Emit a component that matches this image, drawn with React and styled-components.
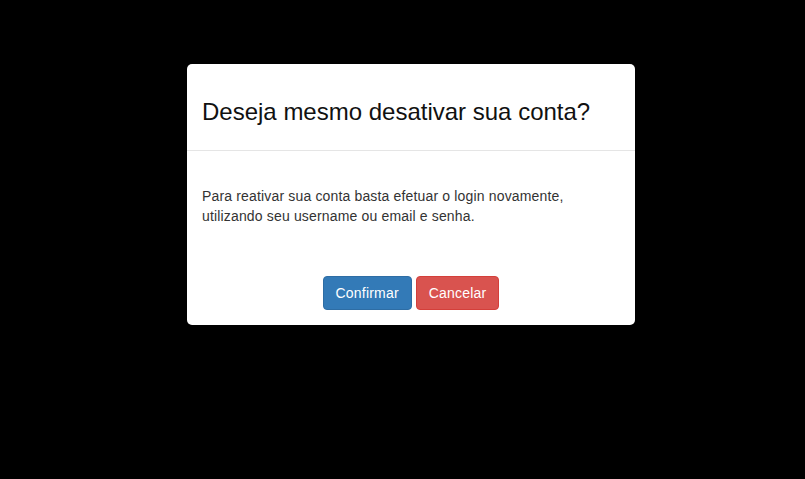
import React from "react";
import styled, { createGlobalStyle } from "styled-components";

const Global = createGlobalStyle`
  html, body { margin: 0; padding: 0; background: #000; }
  body { font-family: "Liberation Sans", Arial, sans-serif; font-size: 14px; line-height: 20px; color: #333; }
  * { box-sizing: border-box; }
`;

const Backdrop = styled.div`
  min-height: 479px;
  background: #000;
  display: flex;
  justify-content: center;
  align-items: flex-start;
  padding: 64px 0 0 17px;
`;

const Dialog = styled.div`
  width: 448px;
  background: #fff;
  border-radius: 5px;
  overflow: hidden;
`;

const Header = styled.div`
  padding: 15px;
  border-bottom: 1px solid #e5e5e5;
`;

const Title = styled.h3`
  margin: 20px 0 10px;
  font-size: 24px;
  line-height: 26.4px;
  font-weight: 400;
  color: #111;
`;

const Body = styled.div`
  padding: 35px 15px;
`;

const Text = styled.p`
  margin: 0;
  color: #333;
  letter-spacing: 0.16px;
`;

const Footer = styled.div`
  padding: 15px;
  display: flex;
  justify-content: center;
  gap: 4px;
`;

const Button = styled.button`
  font-family: inherit;
  font-size: 14px;
  line-height: 20px;
  letter-spacing: 0.2px;
  padding: 6px 12px;
  border-radius: 4px;
  color: #fff;
  border: 1px solid ${(p) => (p.$variant === "danger" ? "#d43f3a" : "#2e6da4")};
  background: ${(p) => (p.$variant === "danger" ? "#d9534f" : "#337ab7")};
  cursor: pointer;
`;

export default function App() {
  return (
    <>
      <Global />
      <Backdrop>
        <Dialog>
          <Header>
            <Title>Deseja mesmo desativar sua conta?</Title>
          </Header>
          <Body>
            <Text>
              Para reativar sua conta basta efetuar o login novamente,
              <br />
              utilizando seu username ou email e senha.
            </Text>
          </Body>
          <Footer>
            <Button $variant="primary">Confirmar</Button>
            <Button $variant="danger">Cancelar</Button>
          </Footer>
        </Dialog>
      </Backdrop>
    </>
  );
}
